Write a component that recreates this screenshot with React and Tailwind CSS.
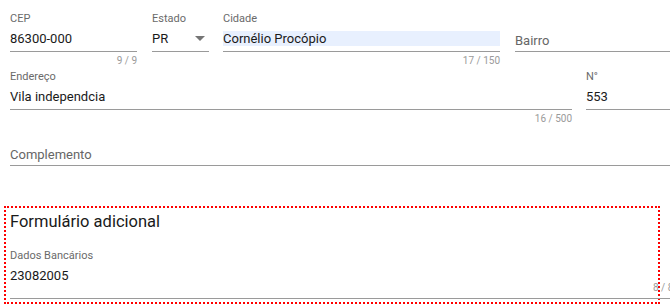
import React from "react";

function Field({ label, value, counter, width, className = "", autofill = false, placeholder, children }) {
  return (
    <div className={`shrink-0 ${className}`} style={width ? { width } : undefined}>
      <div className="h-[14px] text-[11px] leading-[14px] text-[#6a6a6a]">{label}</div>
      <div className="mt-[5px] border-b border-[#9a9a9a] pb-[5px]">
        <div className={`relative flex h-[15px] items-center ${autofill ? "bg-[#e8f0fe]" : ""}`}>
          {placeholder ? (
            <span className="mt-[3px] text-[13px] leading-[15px] text-[#666]">{placeholder}</span>
          ) : (
            <span className="text-[13px] leading-[15px] text-[#1a1a1a]">{value}</span>
          )}
          {children}
        </div>
      </div>
      <div className="mt-[3px] h-[12px] text-right text-[10px] leading-[12px] text-[#9a9a9a]">{counter}</div>
    </div>
  );
}

export default function App() {
  return (
    <div className="h-[307px] w-[670px] overflow-hidden bg-white" style={{ fontFamily: "Roboto, 'Liberation Sans', sans-serif" }}>
      <div className="w-[680px]">
        <div className="mt-[12px] flex pl-[10px]">
          <Field label="CEP" value="86300-000" counter="9 / 9" width={127} />
          <Field label="Estado" value="PR" width={57} className="ml-[15px]">
            <svg className="absolute right-[4px] top-[5px]" width="10" height="5" viewBox="0 0 10 5">
              <path d="M0 0 L10 0 L5 5 Z" fill="#757575" />
            </svg>
          </Field>
          <Field label="Cidade" value="Cornélio Procópio" counter="17 / 150" width={277} className="ml-[14px]" autofill />
          <Field label="" placeholder="Bairro" className="ml-[15px] flex-1" />
        </div>

        <div className="mt-[3px] flex pl-[10px]">
          <Field label="Endereço" value="Vila independcia" counter="16 / 500" width={562} />
          <Field label="N°" value="553" className="ml-[14px] flex-1" />
        </div>

        <div className="mt-[1px] flex pl-[10px]">
          <Field label="" placeholder="Complemento" className="flex-1" />
        </div>

        <div className="ml-[4px] mt-[25px] h-[98px] w-[656px] border-2 border-dotted border-[#ff0000] pl-[4px] pt-[4px]">
          <div className="h-[20px] text-[16.5px] leading-[20px] text-[#1a1a1a]">Formulário adicional</div>
          <div className="relative mt-[17px] w-[670px]">
            <div className="h-[14px] text-[11px] leading-[14px] text-[#6a6a6a]">Dados Bancários</div>
            <div className="mt-[5px] h-[31px] border-b border-[#9a9a9a]">
              <div className="text-[13px] leading-[15px] text-[#1a1a1a]">23082005</div>
            </div>
            <div className="absolute left-[643px] top-[33px] whitespace-nowrap text-[10px] leading-[12px] text-[#9a9a9a]">8 / 8</div>
          </div>
        </div>
      </div>
    </div>
  );
}
